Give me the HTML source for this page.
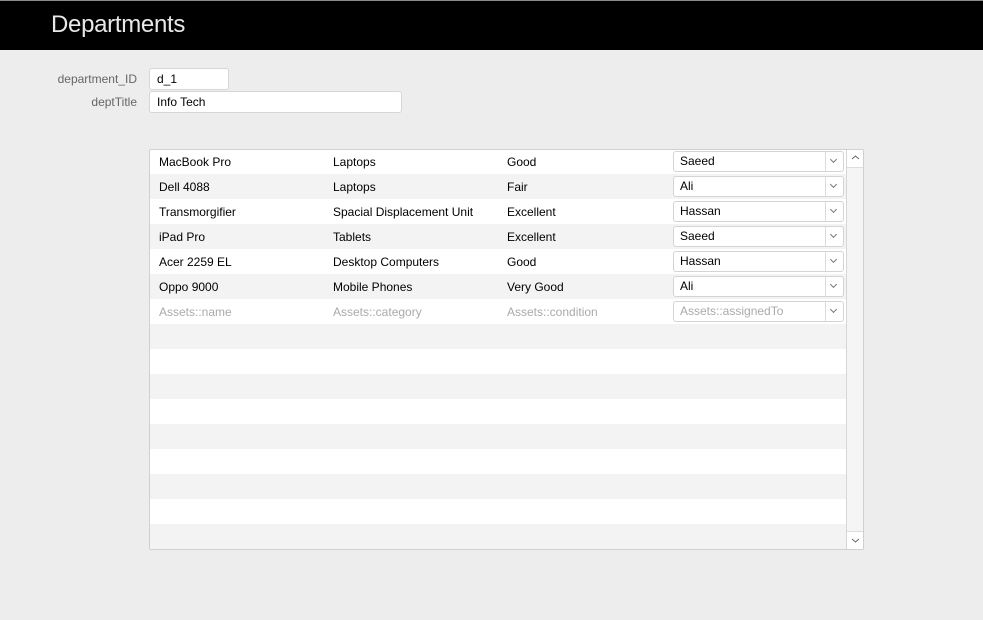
<!DOCTYPE html>
<html><head><style>
body{margin:0;width:983px;height:620px;background:#ededed;font-family:"Liberation Sans",sans-serif;position:relative;overflow:hidden}
.hdr{position:absolute;left:0;top:0;width:983px;height:50px;background:#000;border-top:1px solid #888;box-sizing:border-box}
.hdr span{position:absolute;left:51px;top:10px;color:#e8e8e8;font-size:24px;letter-spacing:-0.3px}
.lbl{position:absolute;font-size:12px;color:#666;text-align:right;width:137px;left:0}
.inp{position:absolute;background:#fff;border:1px solid #d6d6d6;border-radius:3px;box-sizing:border-box;font-size:12px;padding:3px 0 0 7px;color:#000}
.portal{position:absolute;left:149px;top:149px;width:715px;height:401px;border:1px solid #d0d0d0;box-sizing:border-box;background:#fff;border-radius:2px;overflow:hidden}
.row{position:absolute;left:0;width:696px;height:25px;font-size:12px;margin-top:-1px}
.row.g{background:#f3f3f3}
.row span{position:absolute;top:6px}
.dd{position:absolute;left:523px;top:2px;width:171px;height:21px;border:1px solid #d4d4d4;border-radius:3px;background:#fff;box-sizing:border-box}
.dd span{left:6px;top:2px!important}
.dd i{position:absolute;right:0;top:0;width:17px;height:19px;border-left:1px solid #dcdcdc}
.dd i:after{content:"";position:absolute;left:5px;top:5px;width:4px;height:4px;border-right:1px solid #777;border-bottom:1px solid #777;transform:rotate(45deg)}
.ph{color:#aaa}
.sb{position:absolute;left:696px;top:0;width:17px;height:399px;border-left:1px solid #d6d6d6;background:#f5f5f5}
.sb b{position:absolute;left:0;width:17px;height:17px;background:#fff}
</style></head><body>
<div class="hdr"><span>Departments</span></div>
<div class="lbl" style="top:72px">department_ID</div>
<div class="lbl" style="top:95px">deptTitle</div>
<div class="inp" style="left:149px;top:68px;width:80px;height:22px">d_1</div>
<div class="inp" style="left:149px;top:91px;width:253px;height:22px">Info Tech</div>
<div class="portal">
<div class="row" style="top:0"><span style="left:9px">MacBook Pro</span><span style="left:183px">Laptops</span><span style="left:357px">Good</span><div class="dd"><span>Saeed</span><i></i></div></div>
<div class="row g" style="top:25px"><span style="left:9px">Dell 4088</span><span style="left:183px">Laptops</span><span style="left:357px">Fair</span><div class="dd"><span>Ali</span><i></i></div></div>
<div class="row" style="top:50px"><span style="left:9px">Transmorgifier</span><span style="left:183px">Spacial Displacement Unit</span><span style="left:357px">Excellent</span><div class="dd"><span>Hassan</span><i></i></div></div>
<div class="row g" style="top:75px"><span style="left:9px">iPad Pro</span><span style="left:183px">Tablets</span><span style="left:357px">Excellent</span><div class="dd"><span>Saeed</span><i></i></div></div>
<div class="row" style="top:100px"><span style="left:9px">Acer 2259 EL</span><span style="left:183px">Desktop Computers</span><span style="left:357px">Good</span><div class="dd"><span>Hassan</span><i></i></div></div>
<div class="row g" style="top:125px"><span style="left:9px">Oppo 9000</span><span style="left:183px">Mobile Phones</span><span style="left:357px">Very Good</span><div class="dd"><span>Ali</span><i></i></div></div>
<div class="row ph" style="top:150px"><span style="left:9px">Assets::name</span><span style="left:183px">Assets::category</span><span style="left:357px">Assets::condition</span><div class="dd"><span>Assets::assignedTo</span><i></i></div></div>
<div class="row g" style="top:175px"></div>
<div class="row" style="top:200px"></div>
<div class="row g" style="top:225px"></div>
<div class="row" style="top:250px"></div>
<div class="row g" style="top:275px"></div>
<div class="row" style="top:300px"></div>
<div class="row g" style="top:325px"></div>
<div class="row" style="top:350px"></div>
<div class="row g" style="top:375px;height:26px"></div>
<div class="sb"><b style="top:0;border-bottom:1px solid #ddd"><svg width="17" height="17"><path d="M5 9 L8.5 6 L12 9" fill="none" stroke="#666"/></svg></b><b style="top:381px;border-top:1px solid #ddd"><svg width="17" height="17"><path d="M5 7 L8.5 10 L12 7" fill="none" stroke="#666"/></svg></b></div>
</div>
</body></html>
